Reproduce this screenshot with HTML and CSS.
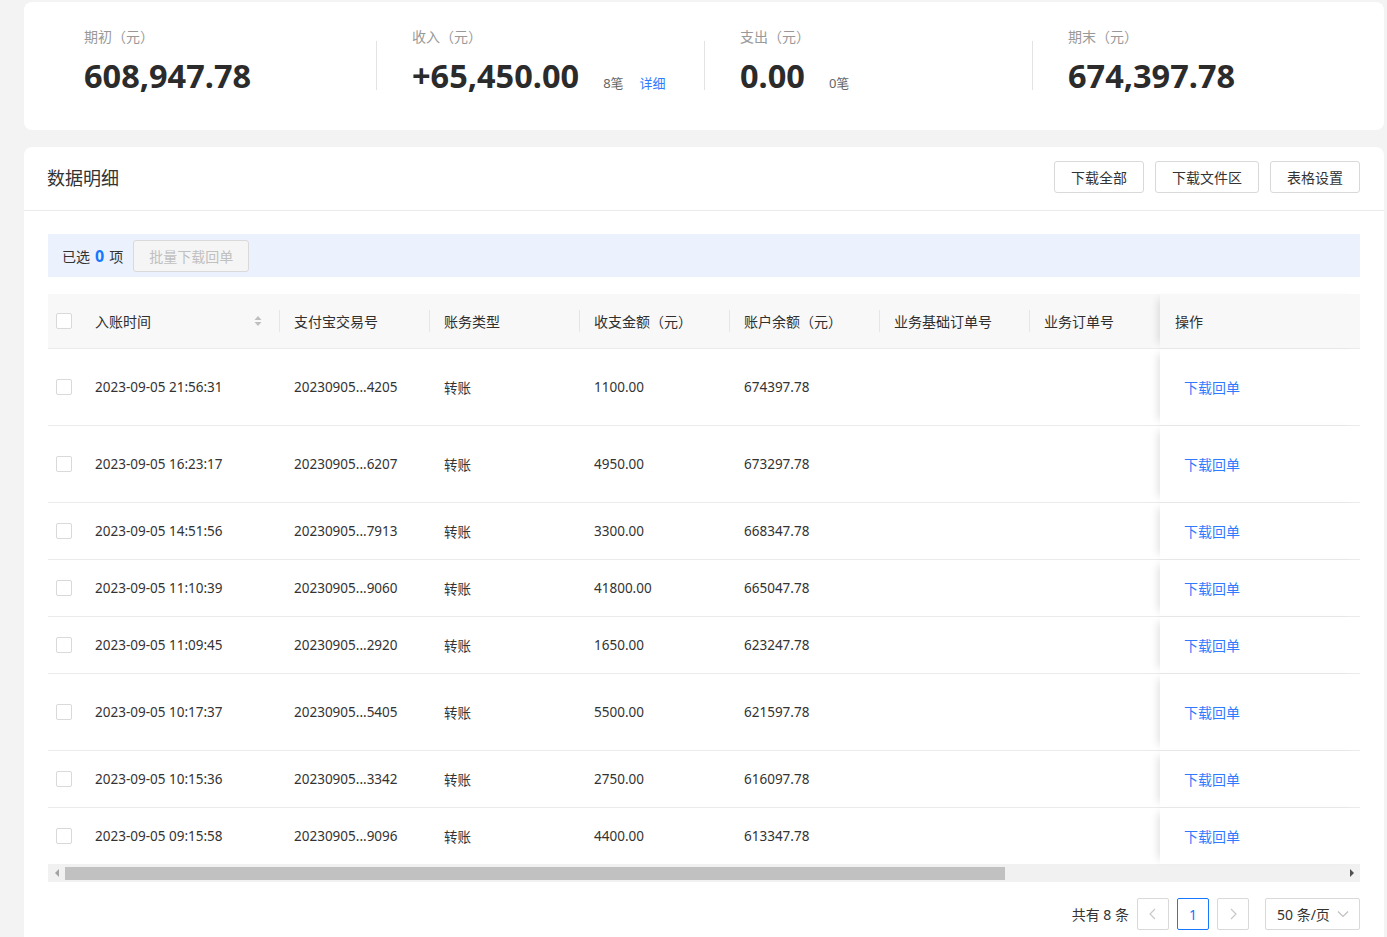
FILE: index.html
```html
<!DOCTYPE html>
<html lang="zh-CN">
<head>
<meta charset="utf-8">
<title>数据明细</title>
<link rel="stylesheet" href="styles.css">
</head>
<body>
<div class="page">
  <section class="card summary">
    <div class="stat">
      <div class="stat-label">期初（元）</div>
      <div class="stat-value"><span class="num">608,947.78</span></div>
    </div>
    <div class="stat divided">
      <div class="stat-label">收入（元）</div>
      <div class="stat-value"><span class="num">+65,450.00</span><span class="count">8笔</span><a class="detail-link">详细</a></div>
    </div>
    <div class="stat divided">
      <div class="stat-label">支出（元）</div>
      <div class="stat-value"><span class="num">0.00</span><span class="count">0笔</span></div>
    </div>
    <div class="stat divided">
      <div class="stat-label">期末（元）</div>
      <div class="stat-value"><span class="num">674,397.78</span></div>
    </div>
  </section>

  <section class="card detail-card">
    <header class="detail-head">
      <h2 class="detail-title">数据明细</h2>
      <div class="head-actions">
        <button class="btn">下载全部</button>
        <button class="btn">下载文件区</button>
        <button class="btn">表格设置</button>
      </div>
    </header>
    <div class="detail-body">
      <div class="selection-bar">
        <span>已选</span><b class="sel-num">0</b><span>项</span>
        <button class="btn btn-disabled" disabled>批量下载回单</button>
      </div>

      <div class="table">
        <div class="tr thead">
          <div class="cell sel"><span class="checkbox"></span></div>
          <div class="cell th sortable"><span>入账时间</span>
            <svg class="sort-icon" width="8" height="12" viewBox="0 0 8 12"><path d="M4 1 L7.5 5 H0.5 Z" fill="#bfbfbf"/><path d="M4 11 L7.5 7 H0.5 Z" fill="#bfbfbf"/></svg>
          </div>
          <div class="cell th sep">支付宝交易号</div>
          <div class="cell th sep">账务类型</div>
          <div class="cell th sep">收支金额（元）</div>
          <div class="cell th sep">账户余额（元）</div>
          <div class="cell th sep">业务基础订单号</div>
          <div class="cell th sep">业务订单号</div>
          <div class="cell th op">操作</div>
        </div>

        <div class="tr tall">
          <div class="cell sel"><span class="checkbox"></span></div>
          <div class="cell">2023-09-05 21:56:31</div>
          <div class="cell">20230905...4205</div>
          <div class="cell">转账</div>
          <div class="cell">1100.00</div>
          <div class="cell">674397.78</div>
          <div class="cell"></div>
          <div class="cell"></div>
          <div class="cell op"><a class="op-link">下载回单</a></div>
        </div>
        <div class="tr tall">
          <div class="cell sel"><span class="checkbox"></span></div>
          <div class="cell">2023-09-05 16:23:17</div>
          <div class="cell">20230905...6207</div>
          <div class="cell">转账</div>
          <div class="cell">4950.00</div>
          <div class="cell">673297.78</div>
          <div class="cell"></div>
          <div class="cell"></div>
          <div class="cell op"><a class="op-link">下载回单</a></div>
        </div>
        <div class="tr short">
          <div class="cell sel"><span class="checkbox"></span></div>
          <div class="cell">2023-09-05 14:51:56</div>
          <div class="cell">20230905...7913</div>
          <div class="cell">转账</div>
          <div class="cell">3300.00</div>
          <div class="cell">668347.78</div>
          <div class="cell"></div>
          <div class="cell"></div>
          <div class="cell op"><a class="op-link">下载回单</a></div>
        </div>
        <div class="tr short">
          <div class="cell sel"><span class="checkbox"></span></div>
          <div class="cell">2023-09-05 11:10:39</div>
          <div class="cell">20230905...9060</div>
          <div class="cell">转账</div>
          <div class="cell">41800.00</div>
          <div class="cell">665047.78</div>
          <div class="cell"></div>
          <div class="cell"></div>
          <div class="cell op"><a class="op-link">下载回单</a></div>
        </div>
        <div class="tr short">
          <div class="cell sel"><span class="checkbox"></span></div>
          <div class="cell">2023-09-05 11:09:45</div>
          <div class="cell">20230905...2920</div>
          <div class="cell">转账</div>
          <div class="cell">1650.00</div>
          <div class="cell">623247.78</div>
          <div class="cell"></div>
          <div class="cell"></div>
          <div class="cell op"><a class="op-link">下载回单</a></div>
        </div>
        <div class="tr tall">
          <div class="cell sel"><span class="checkbox"></span></div>
          <div class="cell">2023-09-05 10:17:37</div>
          <div class="cell">20230905...5405</div>
          <div class="cell">转账</div>
          <div class="cell">5500.00</div>
          <div class="cell">621597.78</div>
          <div class="cell"></div>
          <div class="cell"></div>
          <div class="cell op"><a class="op-link">下载回单</a></div>
        </div>
        <div class="tr short">
          <div class="cell sel"><span class="checkbox"></span></div>
          <div class="cell">2023-09-05 10:15:36</div>
          <div class="cell">20230905...3342</div>
          <div class="cell">转账</div>
          <div class="cell">2750.00</div>
          <div class="cell">616097.78</div>
          <div class="cell"></div>
          <div class="cell"></div>
          <div class="cell op"><a class="op-link">下载回单</a></div>
        </div>
        <div class="tr short last">
          <div class="cell sel"><span class="checkbox"></span></div>
          <div class="cell">2023-09-05 09:15:58</div>
          <div class="cell">20230905...9096</div>
          <div class="cell">转账</div>
          <div class="cell">4400.00</div>
          <div class="cell">613347.78</div>
          <div class="cell"></div>
          <div class="cell"></div>
          <div class="cell op"><a class="op-link">下载回单</a></div>
        </div>
      </div>

      <div class="hscroll">
        <span class="arrow arrow-left"></span>
        <div class="thumb"></div>
        <div class="track-rest"></div>
        <span class="arrow arrow-right"></span>
      </div>

      <div class="pager">
        <span class="total">共有 8 条</span>
        <span class="page-btn disabled"><svg width="10" height="12" viewBox="0 0 10 12"><path d="M7 1 L2 6 L7 11" fill="none" stroke="#c8c8c8" stroke-width="1.2"/></svg></span>
        <span class="page-btn current">1</span>
        <span class="page-btn disabled"><svg width="10" height="12" viewBox="0 0 10 12"><path d="M3 1 L8 6 L3 11" fill="none" stroke="#c8c8c8" stroke-width="1.2"/></svg></span>
        <span class="size-select"><span>50 条/页</span><svg width="12" height="8" viewBox="0 0 12 8"><path d="M1 1.5 L6 6.5 L11 1.5" fill="none" stroke="#c0c0c0" stroke-width="1.2"/></svg></span>
      </div>
    </div>
  </section>
</div>
</body>
</html>
```

FILE: styles.css
```css
* { box-sizing: border-box; }

body {
  margin: 0;
  background: #f3f3f3;
  font-family: "Noto Sans", "Noto Sans CJK SC", sans-serif;
  color: #333;
}

.page {
  padding: 2px 3px 0 24px;
}

.card {
  background: #fff;
  border-radius: 8px;
}

/* summary */
.summary {
  display: flex;
  padding: 25px 24px 32px;
}

.stat {
  flex: 1;
  padding-left: 36px;
  position: relative;
}

.stat.divided::before {
  content: "";
  position: absolute;
  left: 0;
  top: 14px;
  bottom: 8px;
  width: 1px;
  background: #e3e3e3;
}

.stat-label {
  font-size: 14px;
  line-height: 20px;
  color: #999;
}

.stat-value {
  margin-top: 7px;
  height: 44px;
  display: flex;
  align-items: baseline;
}

.num {
  font-size: 32.5px;
  font-weight: 700;
  line-height: 44px;
  color: #2b2b2b;
}

.count {
  margin-left: 24px;
  font-size: 13px;
  color: #666;
}

.detail-link {
  margin-left: 16px;
  font-size: 13px;
  color: #2f7bff;
}

/* detail card */
.detail-card {
  margin-top: 17px;
  border-radius: 8px 8px 0 0;
}

.detail-head {
  height: 64px;
  border-bottom: 1px solid #ebebeb;
  display: flex;
  align-items: center;
  justify-content: space-between;
  padding: 0 24px 3px 23px;
}

.detail-title {
  margin: 0;
  font-size: 18px;
  font-weight: 400;
  color: #333;
}

.head-actions {
  display: flex;
  gap: 11px;
}

.btn {
  height: 32px;
  padding: 0 16px;
  border: 1px solid #d9d9d9;
  border-radius: 3px;
  background: #fff;
  font-family: "Noto Sans", "Noto Sans CJK SC", sans-serif;
  font-size: 14px;
  color: #333;
}

.detail-body {
  padding: 23px 24px 40px;
}

.selection-bar {
  height: 43px;
  background: #ebf2fe;
  display: flex;
  align-items: center;
  padding-left: 14px;
  font-size: 14px;
  color: #333;
}

.sel-num {
  color: #1677ff;
  font-size: 16px;
  font-weight: 700;
  margin: 0 5px;
}

.btn-disabled {
  margin-left: 10px;
  width: 116px;
  padding: 0;
  background: #f5f5f5;
  color: #c0c0c0;
}

/* table */
.table {
  margin-top: 17px;
}

.tr {
  display: grid;
  grid-template-columns: 32px 199px 150px 150px 150px 150px 150px 131px 200px;
  border-bottom: 1px solid #ebebeb;
}

.tr.last {
  border-bottom: none;
}

.thead {
  height: 55px;
  background: #f8f8f8;
}

.tall { height: 77px; }
.short { height: 57px; }
.tr.last { height: 56px; }

.cell {
  display: flex;
  align-items: center;
  padding: 0 15px;
  font-size: 13.5px;
  color: #333;
  white-space: nowrap;
  overflow: hidden;
}

.cell.sel {
  padding: 0 0 0 8px;
}

.th {
  font-size: 14px;
  color: #2f2f2f;
  position: relative;
}

.th.sep::before {
  content: "";
  position: absolute;
  left: 0;
  top: 16px;
  height: 22px;
  width: 1px;
  background: #e6e6e6;
}

.sortable {
  justify-content: space-between;
  padding-right: 17px;
}

.sort-icon { display: block; }

.checkbox {
  display: block;
  width: 16px;
  height: 16px;
  border: 1px solid #d9d9d9;
  border-radius: 2px;
  background: #fff;
}

.op {
  background: #fff;
  box-shadow: -7px 0 8px -5px rgba(0, 0, 0, 0.12);
  padding-left: 24px;
  overflow: visible;
}

.th.op {
  background: #f8f8f8;
  padding-left: 15px;
}

.op-link {
  color: #2f7bff;
  font-size: 14px;
}

/* scrollbar */
.hscroll {
  height: 18px;
  display: flex;
  align-items: center;
  background: #f1f1f1;
}

.arrow {
  width: 17px;
  height: 18px;
  display: flex;
  align-items: center;
  justify-content: center;
  flex: none;
}

.arrow-left::before {
  content: "";
  border-top: 4px solid transparent;
  border-bottom: 4px solid transparent;
  border-right: 4px solid #a3a3a3;
}

.arrow-right::before {
  content: "";
  border-top: 4px solid transparent;
  border-bottom: 4px solid transparent;
  border-left: 4px solid #505050;
}

.thumb {
  flex: none;
  width: 940px;
  height: 13px;
  background: #c1c1c1;
}

.track-rest { flex: 1; }

/* pager */
.pager {
  margin-top: 16px;
  display: flex;
  justify-content: flex-end;
  align-items: center;
  gap: 8px;
}

.total {
  font-size: 14px;
  color: #333;
}

.page-btn {
  width: 32px;
  height: 32px;
  border: 1px solid #d9d9d9;
  border-radius: 2px;
  display: flex;
  align-items: center;
  justify-content: center;
  font-size: 14px;
  background: #fff;
}

.page-btn.current {
  border-color: #1677ff;
  color: #1677ff;
}

.size-select {
  margin-left: 8px;
  width: 95px;
  height: 32px;
  border: 1px solid #d9d9d9;
  border-radius: 2px;
  display: flex;
  align-items: center;
  justify-content: space-between;
  padding: 0 10px 0 11px;
  font-size: 14px;
  color: #333;
}
```
